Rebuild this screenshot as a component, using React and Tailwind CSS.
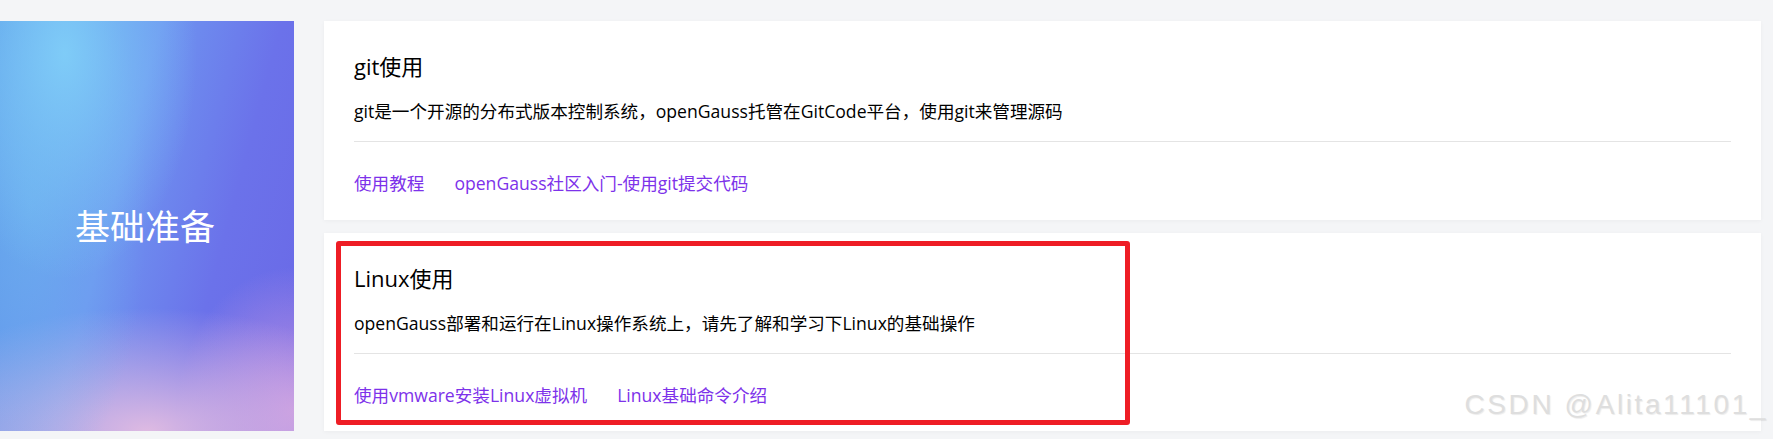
import React from "react";

const FONT = { fontFamily: '"Open Sans", "Noto Sans CJK SC", sans-serif' };

function Card({ title, desc, links, children }) {
  return (
    <div className="relative flex-1 bg-white px-[30px] pt-[30px] shadow-[0_1px_4px_rgba(0,0,0,0.04)]">
      <div className="text-[22px] leading-[30px] text-[#000]">{title}</div>
      <div className="mt-[17px] text-[17.6px] leading-[26px] text-[#000]">{desc}</div>
      <div className="mt-[17px] h-px bg-[#e4e4e4]" />
      <div className="mt-[28px] flex gap-[30px] text-[17.6px] leading-[26px] text-[#7d32ea]">
        {links.map((l) => (
          <a key={l} href="#" className="cursor-pointer">
            {l}
          </a>
        ))}
      </div>
      {children}
    </div>
  );
}

export default function App() {
  return (
    <div
      style={FONT}
      className="relative flex h-[439px] w-full gap-[30px] bg-[#f4f5f7] pb-[8px] pr-[12px] pt-[21px]"
    >
      <div className="flex w-[294px] shrink-0 items-center justify-center bg-[radial-gradient(ellipse_45%_55%_at_22%_8%,rgba(128,206,248,0.95),rgba(128,206,248,0)_100%),radial-gradient(ellipse_40%_70%_at_10%_45%,rgba(110,180,240,0.7),rgba(110,180,240,0)_100%),radial-gradient(ellipse_90%_30%_at_50%_100%,rgba(222,186,226,1),rgba(222,186,226,0)_100%),radial-gradient(ellipse_40%_35%_at_100%_95%,rgba(200,150,225,0.9),rgba(200,150,225,0)_100%),linear-gradient(105deg,#5795e6_0%,#6e95f0_40%,#6b72ea_70%,#6a68e6_100%)]">
        <span className="ml-[-4px] text-[35px] leading-none text-white">基础准备</span>
      </div>
      <div className="flex flex-1 flex-col gap-[13px]">
        <Card
          title="git使用"
          desc="git是一个开源的分布式版本控制系统，openGauss托管在GitCode平台，使用git来管理源码"
          links={["使用教程", "openGauss社区入门-使用git提交代码"]}
        />
        <Card
          title="Linux使用"
          desc="openGauss部署和运行在Linux操作系统上，请先了解和学习下Linux的基础操作"
          links={["使用vmware安装Linux虚拟机", "Linux基础命令介绍"]}
        >
          <div className="pointer-events-none absolute left-[12px] top-[8px] h-[184px] w-[794px] rounded-[3px] border-[5px] border-[#ee1d25]" />
        </Card>
      </div>
      <div
        className="pointer-events-none absolute right-[5px] top-[388px] text-[28px] leading-[34px] tracking-[2.6px] text-[#dedede] [text-shadow:1px_1px_1px_rgba(0,0,0,0.08)]"
        style={{ fontFamily: '"Liberation Sans", Arial, sans-serif' }}
      >
        CSDN @Alita11101_
      </div>
    </div>
  );
}
